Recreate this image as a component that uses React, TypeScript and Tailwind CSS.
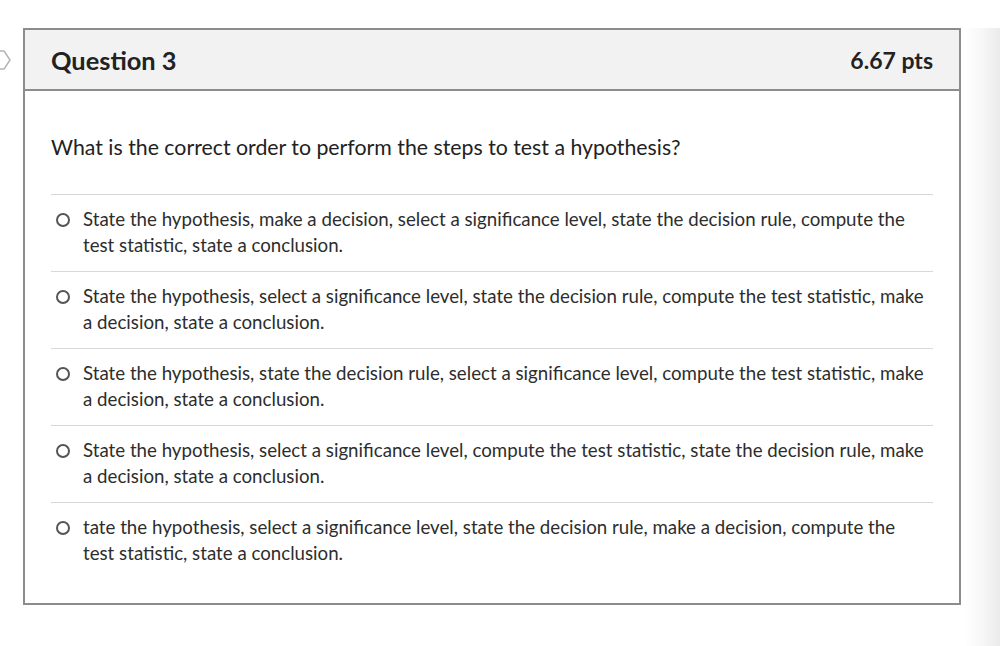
const ANSWERS = [
  "State the hypothesis, make a decision, select a significance level, state the decision rule, compute the test statistic, state a conclusion.",
  "State the hypothesis, select a significance level, state the decision rule, compute the test statistic, make a decision, state a conclusion.",
  "State the hypothesis, state the decision rule, select a significance level, compute the test statistic, make a decision, state a conclusion.",
  "State the hypothesis, select a significance level, compute the test statistic, state the decision rule, make a decision, state a conclusion.",
  "tate the hypothesis, select a significance level, state the decision rule, make a decision, compute the test statistic, state a conclusion.",
];

function Answer({ text }: { text: string }) {
  return (
    <div className="flex border-t border-[#d8d8d8] pt-[11px] pb-[13px]">
      <div className="flex w-[32px] shrink-0 pt-[7px] pl-[5px]">
        <span className="block h-[14px] w-[14px] rounded-full border-2 border-[#555] bg-white" />
      </div>
      <p className="max-w-[846px] text-[18.7px] leading-[26px] text-[#2d2d2d]">{text}</p>
    </div>
  );
}

export default function App() {
  return (
    <div
      className="flex h-[646px] w-[1000px] bg-white pt-[28px]"
      style={{ fontFamily: "Lato, 'Open Sans', sans-serif" }}
    >
      <div className="w-[23px] shrink-0">
        <svg width="23" height="60" viewBox="0 0 23 60">
          <path d="M-2 23 L4 23 L10 32 L4 41 L-2 41" fill="none" stroke="#b5b5b5" strokeWidth="1.5" strokeLinejoin="round" />
        </svg>
      </div>
      <div className="h-[577px] w-[938px] shrink-0 border-2 border-[#8c8c8c] bg-white">
        <div className="flex h-[61px] items-center justify-between border-b-2 border-[#8c8c8c] bg-[#f2f2f2] px-[26px] pt-[2px]">
          <h2 className="text-[25.4px] font-bold text-[#222]">Question 3</h2>
          <span className="text-[23px] font-bold text-[#222]">6.67 pts</span>
        </div>
        <div className="px-[26px] pt-[41px]">
          <p className="text-[21.3px] leading-[30px] text-[#222]">
            What is the correct order to perform the steps to test a hypothesis?
          </p>
          <div className="mt-[32px]">
            {ANSWERS.map((a, i) => (
              <Answer key={i} text={a} />
            ))}
          </div>
        </div>
      </div>
      <div className="ml-[3px] h-full flex-1 bg-gradient-to-r from-white via-[#f7f7f7] to-[#ebebeb]" />
    </div>
  );
}
